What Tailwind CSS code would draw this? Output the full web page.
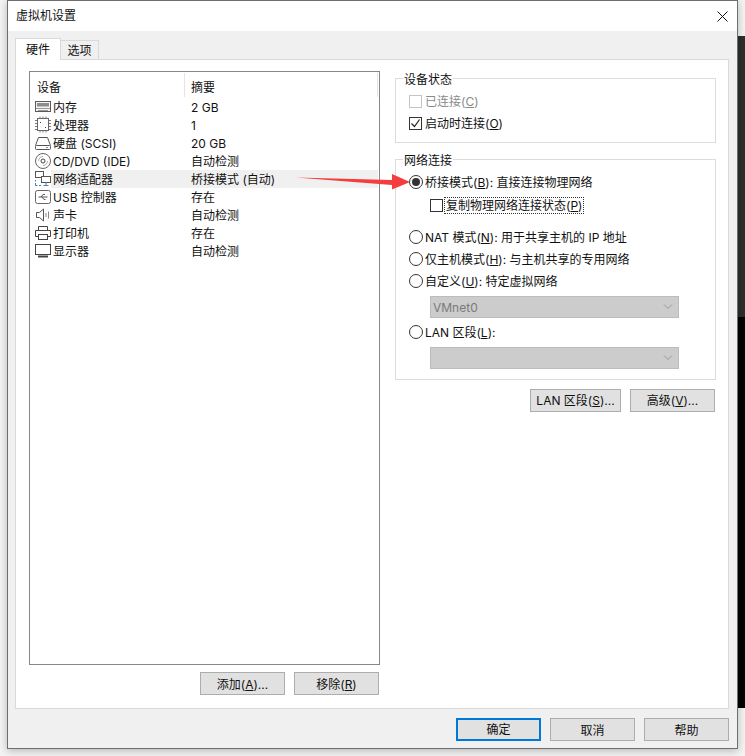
<!DOCTYPE html>
<html lang="zh-CN">
<head>
  <meta charset="UTF-8">
  <title>虚拟机设置</title>
  <script src="https://cdn.jsdelivr.net/npm/@tailwindcss/browser@4"></script>
</head>
<body class="relative w-[745px] h-[756px] overflow-hidden bg-[#f4f4f4] text-[12px] leading-[18px] text-[#111] font-['Inter','Noto_Sans_CJK_SC',sans-serif]">
  <!-- desktop behind the dialog -->
  <div class="absolute right-0 top-[36px] w-[8px] h-[281px] bg-[#2e2e2e]"></div>
  <div class="absolute right-0 top-[317px] w-[8px] h-[391px] bg-black"></div>

  <div class="relative ml-[7px] w-[731px] h-[749px] border border-[#6e6e6e] bg-[#f0f0f0] shadow-[0_2px_8px_rgba(0,0,0,0.25)] flex flex-col">
    <div class="h-[30px] shrink-0 bg-white flex items-center justify-between pl-[8px] pr-[8px] pb-[1px]">
      <span>虚拟机设置</span>
      <svg width="11" height="11" viewBox="0 0 11 11" class="mr-[1px] mt-[1px]"><path d="M.5.5l10 10M10.5.5l-10 10" stroke="#111" fill="none"/></svg>
    </div>

    <div class="ml-[7px] mt-[7px] flex items-end h-[22px] relative z-10">
      <div class="w-[46px] h-[22px] bg-white border border-b-0 border-[#d9d9d9] text-center leading-[22px]">硬件</div>
      <div class="w-[38px] h-[19px] mb-[1px] bg-[#f0f0f0] border border-l-0 border-b-0 border-[#d9d9d9] text-center leading-[19px]">选项</div>
    </div>

    <div class="ml-[7px] -mt-[1px] w-[714px] h-[650px] shrink-0 bg-white border border-[#d9d9d9] flex pl-[13px] pt-[11px]">
      <div class="w-[351px]">
        <div class="h-[594px] border border-[#828790]">
          <div class="relative h-[26px] flex pl-[7px] pt-[7px]">
            <span class="w-[154px]">设备</span><span>摘要</span>
            <span class="absolute left-[154px] top-[1px] h-[24px] w-px bg-[#e5e5e5]"></span>
            <span class="absolute left-[347px] top-[1px] h-[24px] w-px bg-[#e5e5e5]"></span>
          </div>

          <div class="flex h-[18px] pl-[5px]">
            <svg width="16" height="18" viewBox="0 0 16 18" fill="none" stroke="#5a5a5a"><rect x=".5" y="3.500" width="15" height="10" fill="#f4f4f4"/><rect x="2" y="5" width="12" height="3.500" fill="#8c8c8c" stroke="none"/><path d="M1 10.500h14M3 12.500h10" stroke="#999"/></svg>
            <div class="flex-1 flex pl-[2px] pt-px mr-px"><span class="w-[138px]">内存</span><span>2 GB</span></div>
          </div>
          <div class="flex h-[18px] pl-[5px]">
            <svg width="16" height="18" viewBox="0 0 16 18" fill="none" stroke="#5a5a5a"><rect x="2.500" y="2.500" width="11" height="12" stroke="#666" fill="#fff"/><path d="M0 4.500h2M0 7.500h2M0 10.500h2M0 13.500h2M14 4.500h2M14 7.500h2M14 10.500h2M14 13.500h2M5 .5v2M8 .5v2M11 .5v2M5 14.500v2M8 14.500v2M11 14.500v2" stroke="#777"/><path d="M5 6h1v1H5zM10 11h1v1h-1z" fill="#444" stroke="none"/></svg>
            <div class="flex-1 flex pl-[2px] pt-px mr-px"><span class="w-[138px]">处理器</span><span>1</span></div>
          </div>
          <div class="flex h-[18px] pl-[5px]">
            <svg width="16" height="18" viewBox="0 0 16 18" fill="none" stroke="#555"><path d="M.5 11.500l3-8h9l3 8"/><rect x=".5" y="11.500" width="15" height="4" rx="1"/><path d="M11 13.500h2" stroke="#888"/></svg>
            <div class="flex-1 flex pl-[2px] pt-px mr-px"><span class="w-[138px]">硬盘 (SCSI)</span><span>20 GB</span></div>
          </div>
          <div class="flex h-[18px] pl-[5px]">
            <svg width="16" height="18" viewBox="0 0 16 18" fill="none" stroke="#666"><circle cx="8" cy="9" r="7.500"/><circle cx="8" cy="9" r="2" stroke="#444"/><path d="M3.500 9a4.500 4.500 0 0 1 4.500-4.500M12.500 9a4.500 4.500 0 0 1-4.500 4.500" stroke="#aaa"/></svg>
            <div class="flex-1 flex pl-[2px] pt-px mr-px"><span class="w-[138px]">CD/DVD (IDE)</span><span>自动检测</span></div>
          </div>
          <div class="flex h-[18px] pl-[5px]">
            <svg width="16" height="18" viewBox="0 0 16 18" fill="none" stroke="#555"><path d="M.5 10v1.500M.5 13v2.500h2M4 15.500h2" stroke="#4a7fb5"/><rect x=".5" y="1.500" width="8" height="6" fill="#fff"/><rect x="6.500" y="6.500" width="9" height="6" fill="#fff"/><path d="M11 12.500v3M8.500 15.500h5" stroke="#4a7fb5"/></svg>
            <div class="flex-1 flex pl-[2px] pt-px mr-px bg-[#f0f0f0]"><span class="w-[138px]">网络适配器</span><span>桥接模式 (自动)</span></div>
          </div>
          <div class="flex h-[18px] pl-[5px]">
            <svg width="16" height="18" viewBox="0 0 16 18" fill="none" stroke="#666"><rect x=".5" y="2.500" width="15" height="13" rx="2"/><path d="M3.500 9h9M6 9l2-2.500h2M7 9l2 2.500h1.500" stroke="#555"/></svg>
            <div class="flex-1 flex pl-[2px] pt-px mr-px"><span class="w-[138px]">USB 控制器</span><span>存在</span></div>
          </div>
          <div class="flex h-[18px] pl-[5px]">
            <svg width="16" height="18" viewBox="0 0 16 18" fill="none" stroke="#555"><path d="M1.500 6.500h3l4-3.500v12l-4-3.500h-3z"/><path d="M11 7v4M13.500 5.500v7" stroke="#888"/></svg>
            <div class="flex-1 flex pl-[2px] pt-px mr-px"><span class="w-[138px]">声卡</span><span>自动检测</span></div>
          </div>
          <div class="flex h-[18px] pl-[5px]">
            <svg width="16" height="18" viewBox="0 0 16 18" fill="none" stroke="#444"><path d="M3.500 6.500v-4h9v4"/><path d="M3.500 12.500h-3v-6h15v6h-3"/><rect x="3.500" y="10.500" width="9" height="5"/></svg>
            <div class="flex-1 flex pl-[2px] pt-px mr-px"><span class="w-[138px]">打印机</span><span>存在</span></div>
          </div>
          <div class="flex h-[18px] pl-[5px]">
            <svg width="16" height="18" viewBox="0 0 16 18" fill="none" stroke="#444"><rect x=".5" y="2.500" width="15" height="10"/><path d="M3 14.500h10" stroke-width="2"/></svg>
            <div class="flex-1 flex pl-[2px] pt-px mr-px"><span class="w-[138px]">显示器</span><span>自动检测</span></div>
          </div>
        </div>

        <div class="mt-[7px] pr-px flex justify-end gap-[9px]">
          <button class="w-[85px] h-[23px] pt-[2px] bg-[#e1e1e1] border border-[#adadad]">添加(<u>A</u>)...</button>
          <button class="w-[85px] h-[23px] pt-[2px] bg-[#e1e1e1] border border-[#adadad]">移除(<u>R</u>)</button>
        </div>
      </div>

      <div class="ml-[15px] w-[321px] pt-[7px]">
        <div class="relative h-[65px] border border-[#dcdcdc] pl-[13px] pt-[11px]">
          <span class="absolute left-[7px] -top-[8px] bg-white px-px">设备状态</span>
          <div class="flex items-center h-[22px] text-[#8a8a8a]">
            <span class="w-[13px] h-[13px] border border-[#c4c4c4]"></span>
            <span class="ml-[3px] pt-[2px]">已连接(<u>C</u>)</span>
          </div>
          <div class="flex items-center h-[22px]">
            <span class="w-[13px] h-[13px] border border-[#333] flex">
              <svg width="11" height="11" viewBox="0 0 11 11" fill="none" stroke="#222" stroke-width="1.200"><path d="M1.500 5.500l3 3 5-7"/></svg>
            </span>
            <span class="ml-[3px] pt-[2px]">启动时连接(<u>O</u>)</span>
          </div>
        </div>

        <div class="relative mt-[16px] h-[221px] border border-[#dcdcdc] pl-[13px] pt-[11px]">
          <span class="absolute left-[7px] -top-[8px] bg-white px-px">网络连接</span>
          <div class="flex items-center h-[22px]">
            <span class="w-[14px] h-[14px] rounded-full border border-[#333] flex items-center justify-center"><span class="w-[8px] h-[8px] rounded-full bg-[#333]"></span></span>
            <span class="ml-[2px] pt-[2px]">桥接模式(<u>B</u>): 直接连接物理网络</span>
          </div>
          <div class="flex items-center h-[22px] mt-px ml-[21px]">
            <span class="w-[13px] h-[13px] border border-[#333]"></span>
            <span class="ml-[1px] px-px border border-dotted border-[#333] h-[17px] leading-[15px]">复制物理网络连接状态(<u>P</u>)</span>
          </div>
          <div class="flex items-center h-[22px] mt-[10px]">
            <span class="w-[14px] h-[14px] rounded-full border border-[#333]"></span>
            <span class="ml-[2px] pt-[2px]">NAT 模式(<u>N</u>): 用于共享主机的 IP 地址</span>
          </div>
          <div class="flex items-center h-[22px]">
            <span class="w-[14px] h-[14px] rounded-full border border-[#333]"></span>
            <span class="ml-[2px] pt-[2px]">仅主机模式(<u>H</u>): 与主机共享的专用网络</span>
          </div>
          <div class="flex items-center h-[22px]">
            <span class="w-[14px] h-[14px] rounded-full border border-[#333]"></span>
            <span class="ml-[2px] pt-[2px]">自定义(<u>U</u>): 特定虚拟网络</span>
          </div>
          <div class="mt-[4px] ml-[21px] w-[249px] h-[22px] bg-[#cccccc] border border-[#bcbcbc] flex items-center justify-between pl-[2px] pr-[5px] text-[#7a7a7a]">
            <span class="pt-[2px]">VMnet0</span>
            <svg width="10" height="6" viewBox="0 0 10 6" fill="none" stroke="#999"><path d="M1 .5l4 4 4-4"/></svg>
          </div>
          <div class="flex items-center h-[22px] mt-[3px]">
            <span class="w-[14px] h-[14px] rounded-full border border-[#333]"></span>
            <span class="ml-[2px] pt-[2px]">LAN 区段(<u>L</u>):</span>
          </div>
          <div class="mt-[4px] ml-[21px] w-[249px] h-[22px] bg-[#cccccc] border border-[#bcbcbc] flex items-center justify-end pr-[5px]">
            <svg width="10" height="6" viewBox="0 0 10 6" fill="none" stroke="#999"><path d="M1 .5l4 4 4-4"/></svg>
          </div>
        </div>

        <div class="mt-[9px] -ml-px flex justify-end gap-[9px] pr-px">
          <button class="w-[91px] h-[23px] bg-[#e1e1e1] border border-[#adadad]">LAN 区段(<u>S</u>)...</button>
          <button class="w-[85px] h-[23px] bg-[#e1e1e1] border border-[#adadad]">高级(<u>V</u>)...</button>
        </div>
      </div>
    </div>

    <div class="mt-[9px] ml-[448px] flex gap-[9px]">
      <button class="w-[85px] h-[23px] pt-px bg-[#e1e1e1] border-2 border-[#0078d7]">确定</button>
      <button class="w-[85px] h-[23px] pt-[2px] bg-[#e1e1e1] border border-[#adadad]">取消</button>
      <button class="w-[85px] h-[23px] pt-[2px] bg-[#e1e1e1] border border-[#adadad]">帮助</button>
    </div>
  </div>

  <!-- red annotation arrow -->
  <svg class="absolute left-0 top-0" width="745" height="756" viewBox="0 0 745 756"><path d="M296 177.500L392 180V174L410 182L392 189.500V185Z" fill="#f53d3d"/></svg>
</body>
</html>
